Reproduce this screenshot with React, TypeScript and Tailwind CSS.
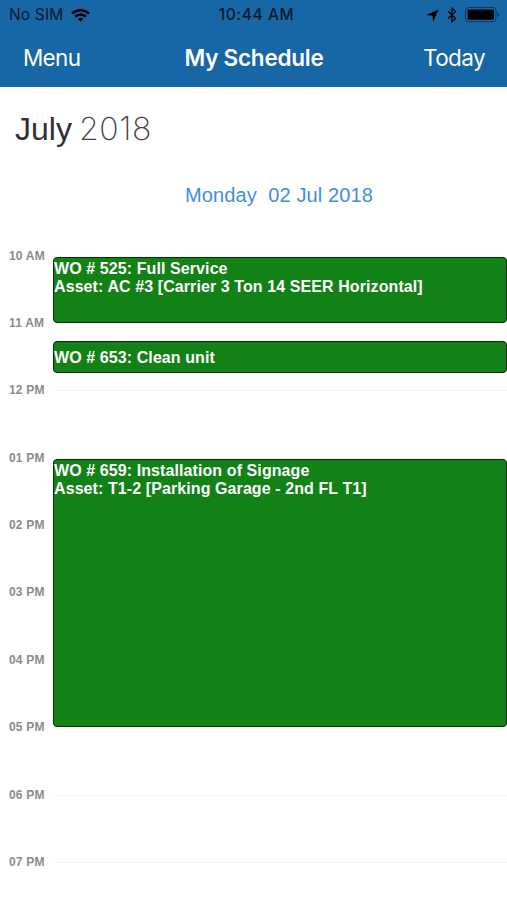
import React from 'react';

const WifiIcon: React.FC<{ className?: string }> = ({ className }) => (
  <svg viewBox="0 0 19 13" className={className} fill="none" stroke="currentColor" strokeWidth="2.5">
    <path d="M1 4.6C5.8 0 13.2 0 18 4.6" />
    <path d="M4.1 7.7C7.2 4.8 11.8 4.8 14.9 7.7" />
    <path d="M6.6 9.9C8.3 8.4 10.7 8.4 12.4 9.9L9.5 12.8Z" fill="currentColor" stroke="none" />
  </svg>
);

const LocationIcon: React.FC<{ className?: string }> = ({ className }) => (
  <svg viewBox="0 0 13 13" className={className} fill="currentColor">
    <path d="M12.6 0.4L7.2 12.6L6.5 6.7L0.4 6.1Z" />
  </svg>
);

const BluetoothIcon: React.FC<{ className?: string }> = ({ className }) => (
  <svg viewBox="0 0 10 16" className={className} fill="none" stroke="currentColor" strokeWidth="1.2">
    <path d="M1 4.3L8.6 11.4L4.9 14.8V1.2L8.6 4.6L1 11.7" />
  </svg>
);

const BatteryIcon: React.FC<{ className?: string }> = ({ className }) => (
  <svg viewBox="0 0 35 16" className={className}>
    <rect x="0.5" y="0.5" width="30.5" height="14.2" rx="3.2" fill="none" stroke="currentColor" strokeOpacity="0.45" />
    <rect x="2.5" y="2.5" width="26.5" height="10.2" rx="1.4" fill="currentColor" />
    <path d="M32.5 5.3C34.8 6 34.8 9.2 32.5 9.9Z" fill="currentColor" fillOpacity="0.45" />
  </svg>
);

const hours = ['10 AM', '11 AM', '12 PM', '01 PM', '02 PM', '03 PM', '04 PM', '05 PM', '06 PM', '07 PM'];

const rows = [
  'row-start-1',
  'row-start-2',
  'row-start-3',
  'row-start-4',
  'row-start-5',
  'row-start-6',
  'row-start-7',
  'row-start-8',
  'row-start-9',
  'row-start-10',
];

const events = [
  {
    lines: ['WO # 525: Full Service', 'Asset: AC #3 [Carrier 3 Ton 14 SEER Horizontal]'],
    className: 'row-start-1 mt-[1.5px] h-[66px] pt-[1.5px]',
  },
  {
    lines: ['WO # 653: Clean unit'],
    className: 'row-start-2 mt-[18.5px] h-8 justify-center pt-[1.5px]',
  },
  {
    lines: ['WO # 659: Installation of Signage', 'Asset: T1-2 [Parking Garage - 2nd FL T1]'],
    className: 'row-start-4 row-span-4 mt-[1.5px] h-[268px] pt-[1.5px]',
  },
];

export default function App() {
  return (
    <div className="h-[900px] w-[507px] overflow-hidden bg-white font-['Liberation_Sans',Arial,sans-serif]">
      <header className="h-[87px] bg-[#1766a5] font-[Inter,sans-serif]">
        {/* Status bar */}
        <div className="grid h-[30px] grid-cols-3 items-center pl-[9px] pr-[7px] text-[15.5px] text-[#06192b]">
          <div className="flex items-center gap-2">
            <span className="tracking-[0.15px]">No SIM</span>
            <WifiIcon className="h-[13px] w-[19px] text-black" />
          </div>
          <span className="pl-[4px] text-center font-medium tracking-[0.6px]">10:44 AM</span>
          <div className="flex items-center justify-end text-black">
            <LocationIcon className="mr-2 h-[13px] w-[13px]" />
            <BluetoothIcon className="mr-2 h-4 w-[10px]" />
            <BatteryIcon className="h-4 w-[35px]" />
          </div>
        </div>

        {/* Navigation bar */}
        <nav className="grid h-[55px] grid-cols-3 items-center px-[22px] text-[22.5px] text-white">
          <button className="pl-px text-left tracking-[-0.7px]">Menu</button>
          <h1 className="whitespace-nowrap pl-px text-center font-semibold tracking-[-0.25px]">My Schedule</h1>
          <button className="text-right tracking-[-0.6px]">Today</button>
        </nav>
      </header>

      <h2 className="flex h-[83px] items-center gap-[7px] pl-[15px] text-[32px] text-[#303030]">
        <span>July</span>
        <span className="font-[Inter,sans-serif] font-extralight tracking-[0.6px] text-[#444]">2018</span>
      </h2>

      <p className="h-[85.5px] whitespace-pre pl-[185px] pt-[10px] text-[20px] leading-[30px] tracking-[0.12px] text-[#3f8fe0]">
        Monday{'  '}02 Jul 2018
      </p>

      {/* Timeline */}
      <div className="grid grid-cols-[52.5px_1fr] grid-rows-[repeat(10,67.4px)]">
        {hours.map((hour, i) => (
          <React.Fragment key={hour}>
            <span className={`col-start-1 ${rows[i]} -mt-[9px] h-[18px] pl-[9px] text-[12px] font-bold leading-[18px] tracking-[0.2px] text-[#8b8b8b]`}>
              {hour}
            </span>
            <div className={`col-start-2 ${rows[i]} border-t border-[#f5f5f5]`} />
          </React.Fragment>
        ))}
        {events.map((event) => (
          <div
            key={event.lines[0]}
            className={`col-start-2 z-10 flex flex-col rounded-[4px] border border-[#062b08] bg-[#128217] pl-[0.5px] text-[16px] font-bold leading-[18px] tracking-[0.09px] text-white ${event.className}`}
          >
            {event.lines.map((line) => (
              <p key={line} className="whitespace-nowrap">{line}</p>
            ))}
          </div>
        ))}
      </div>
    </div>
  );
}
